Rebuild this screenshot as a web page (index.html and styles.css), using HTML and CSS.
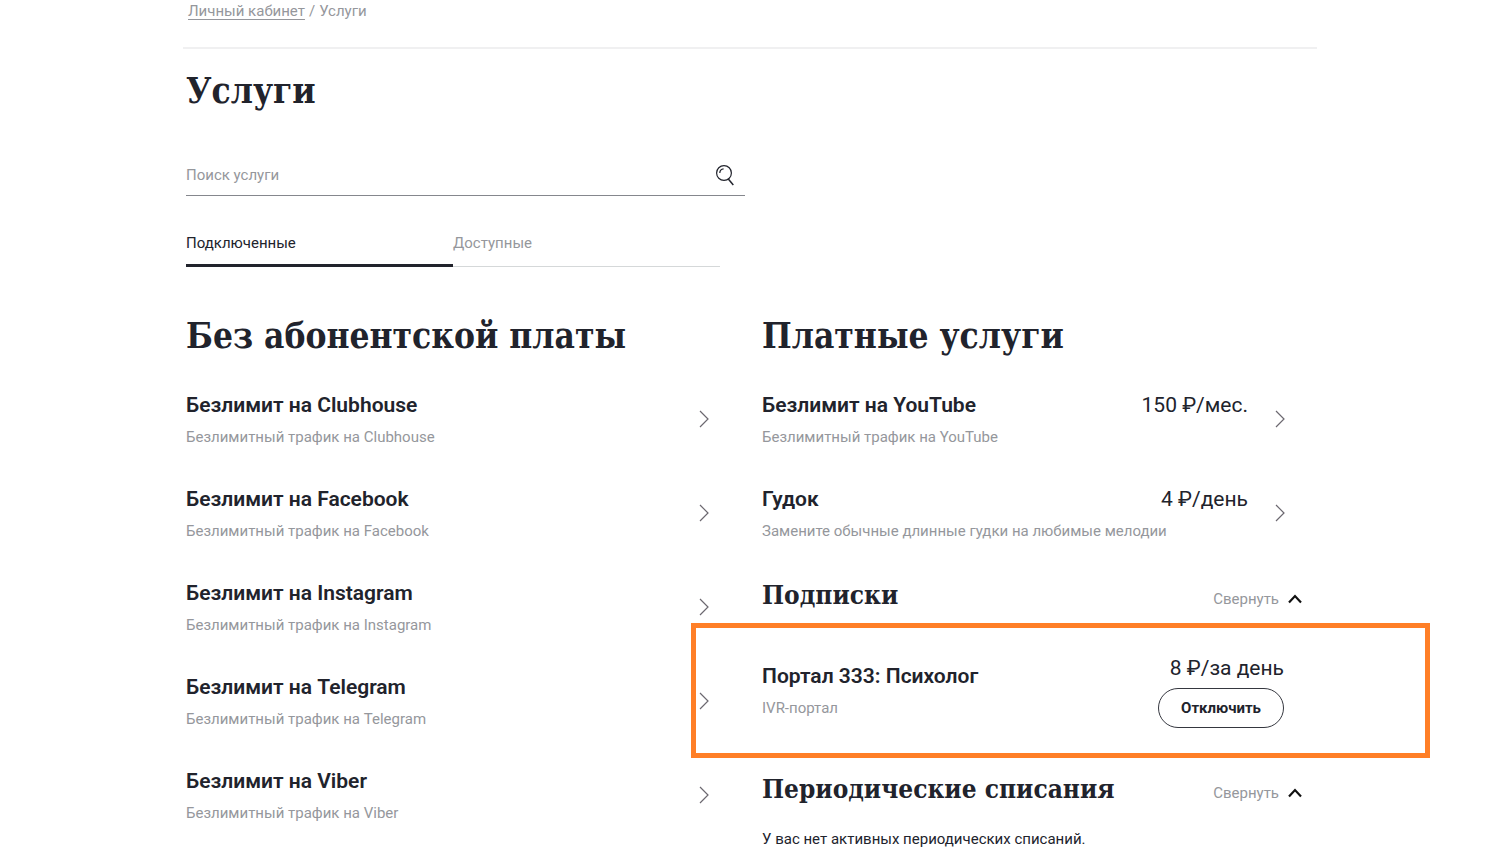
FILE: index.html
```html
<!DOCTYPE html>
<html lang="ru">
<head>
<meta charset="utf-8">
<title>Услуги</title>
<meta name="viewport" content="width=device-width, initial-scale=1">
<link rel="stylesheet" href="styles.css">
</head>
<body>
<svg class="sprite" aria-hidden="true">
  <symbol id="chevron" viewBox="0 0 10 18"><path d="M1 1l8 8-8 8" fill="none" stroke="currentColor" stroke-width="1.2"/></symbol>
  <symbol id="caret" viewBox="0 0 14 10"><path d="M1 8.500l6-6.500 6 6.500" fill="none" stroke="currentColor" stroke-width="2.200"/></symbol>
</svg>
<div class="page">
  <nav class="breadcrumbs" aria-label="Навигация"><a href="#">Личный кабинет</a><span>/</span><span>Услуги</span></nav>
  <main class="content">
    <h1 class="heading">Услуги</h1>
    <form class="search" role="search">
      <input class="search-input" type="text" placeholder="Поиск услуги" aria-label="Поиск услуги">
      <button class="search-button" type="button" aria-label="Найти">
        <svg width="20" height="22" viewBox="0 0 20 22" fill="none" stroke="currentColor"><circle cx="9" cy="9" r="7.400" stroke-width="1.200"/><path d="M4.800 9c0-2.300 1.500-4 3.800-4.200" stroke-width="1.200"/><path d="M13.300 15l5 6" stroke-width="1.500"/></svg>
      </button>
    </form>
    <div class="tabs" role="tablist">
      <button class="tab tab-active" type="button" role="tab" aria-selected="true">Подключенные</button>
      <button class="tab" type="button" role="tab" aria-selected="false">Доступные</button>
    </div>
    <div class="columns">
      <section>
        <h2 class="heading">Без абонентской платы</h2>
        <div class="list">
          <a class="service" href="#"><span class="info"><span class="title">Безлимит на Clubhouse</span><span class="note">Безлимитный трафик на Clubhouse</span></span><svg class="chevron"><use href="#chevron"/></svg></a>
          <a class="service" href="#"><span class="info"><span class="title">Безлимит на Facebook</span><span class="note">Безлимитный трафик на Facebook</span></span><svg class="chevron"><use href="#chevron"/></svg></a>
          <a class="service" href="#"><span class="info"><span class="title">Безлимит на Instagram</span><span class="note">Безлимитный трафик на Instagram</span></span><svg class="chevron"><use href="#chevron"/></svg></a>
          <a class="service" href="#"><span class="info"><span class="title">Безлимит на Telegram</span><span class="note">Безлимитный трафик на Telegram</span></span><svg class="chevron"><use href="#chevron"/></svg></a>
          <a class="service" href="#"><span class="info"><span class="title">Безлимит на Viber</span><span class="note">Безлимитный трафик на Viber</span></span><svg class="chevron"><use href="#chevron"/></svg></a>
        </div>
      </section>
      <section>
        <h2 class="heading">Платные услуги</h2>
        <div class="list">
          <a class="service" href="#"><span class="info"><span class="top"><span class="title">Безлимит на YouTube</span><span class="price">150 ₽/мес.</span></span><span class="note">Безлимитный трафик на YouTube</span></span><svg class="chevron"><use href="#chevron"/></svg></a>
          <a class="service" href="#"><span class="info"><span class="top"><span class="title">Гудок</span><span class="price">4 ₽/день</span></span><span class="note">Замените обычные длинные гудки на любимые мелодии</span></span><svg class="chevron"><use href="#chevron"/></svg></a>
        </div>
        <div class="group-head group-first">
          <h3>Подписки</h3>
          <button class="collapse" type="button">Свернуть<svg class="caret"><use href="#caret"/></svg></button>
        </div>
        <div class="subscription">
          <div class="info"><span class="title">Портал 333: Психолог</span><span class="note">IVR-портал</span></div>
          <div class="action">
            <span class="price">8 ₽/за день</span>
            <button class="disable" type="button">Отключить</button>
          </div>
        </div>
        <div class="group-head group-next">
          <h3>Периодические списания</h3>
          <button class="collapse" type="button">Свернуть<svg class="caret"><use href="#caret"/></svg></button>
        </div>
        <p class="empty">У вас нет активных периодических списаний.</p>
      </section>
    </div>
  </main>
</div>
</body>
</html>
```
FILE: styles.css
```css
* { box-sizing: border-box; }
body {
  margin: 0;
  background: #fff;
  color: #21232c;
  font: 15px/24px Roboto, "Liberation Sans", sans-serif;
  overflow-x: hidden;
}
button, input { font: inherit; color: inherit; border: 0; background: none; padding: 0; }
button { cursor: pointer; }
h1, h2, h3, p { margin: 0; }
.sprite { display: none; }
.page { max-width: 1134px; margin: 0 auto; }
.breadcrumbs {
  display: flex;
  gap: 4px;
  padding: 0 5px 24px;
  line-height: 23px;
  border-bottom: 2px solid #f0f0f1;
  color: #95979c;
}
.breadcrumbs a { color: inherit; text-underline-offset: 3px; }
.content { padding: 18px 15px 9px 3px; }
.heading, h3 { font-family: "DejaVu Serif Condensed", "DejaVu Serif", serif; font-weight: 700; }
.heading { font-size: 35px; line-height: 48px; }
.search {
  display: flex;
  align-items: center;
  max-width: 559px;
  height: 42px;
  margin-top: 39px;
  padding-right: 10px;
  border-bottom: 1px solid #85878d;
}
.search-input { flex: 1; min-width: 0; outline: 0; }
.search-input::placeholder { color: #95979c; opacity: 1; }
.search-button { display: flex; }
.tabs { display: flex; max-width: 534px; margin-top: 28px; }
.tab { flex: 1; height: 43px; padding-bottom: 4px; text-align: left; color: #95979c; border-bottom: 1px solid #d5d8d9; }
.tab-active { padding-bottom: 2px; color: #21232c; border-bottom: 3px solid #21232c; }
.columns { display: grid; grid-template-columns: 1fr 1fr; gap: 36px; margin-top: 45px; }
.list { display: grid; gap: 34px; margin-top: 29px; }
.service { display: flex; align-items: center; gap: 27px; padding-right: 17px; color: inherit; text-decoration: none; }
.info { display: flex; flex: 1; flex-direction: column; gap: 4px; min-width: 0; }
.top { display: flex; justify-content: space-between; gap: 16px; }
.title { font-size: 21px; line-height: 32px; font-weight: 600; }
.note { color: #95979c; }
.price { font-size: 21px; line-height: 32px; white-space: nowrap; }
.chevron { flex: none; width: 10px; height: 18px; color: #6c6870; }
.group-head { display: flex; align-items: center; justify-content: space-between; }
.group-first { margin-top: 32px; }
.group-next { margin-top: 41px; }
h3 { font-size: 26px; line-height: 40px; }
.collapse { display: flex; align-items: center; gap: 9px; padding-top: 8px; color: #95979c; }
.caret { width: 14px; height: 10px; color: #111; }
.subscription { position: relative; display: flex; align-items: center; margin-top: 37px; padding-right: 18px; }
.subscription::after {
  content: "";
  position: absolute;
  inset: -29px -128px -30px -71px;
  border: 5px solid #ff7f27;
  pointer-events: none;
}
.action { display: flex; flex-direction: column; align-items: flex-end; gap: 4px; }
.disable { height: 40px; padding: 0 22px; border: 1px solid #35373f; border-radius: 20px; font-weight: 700; }
.empty { margin-top: 18px; }
```
